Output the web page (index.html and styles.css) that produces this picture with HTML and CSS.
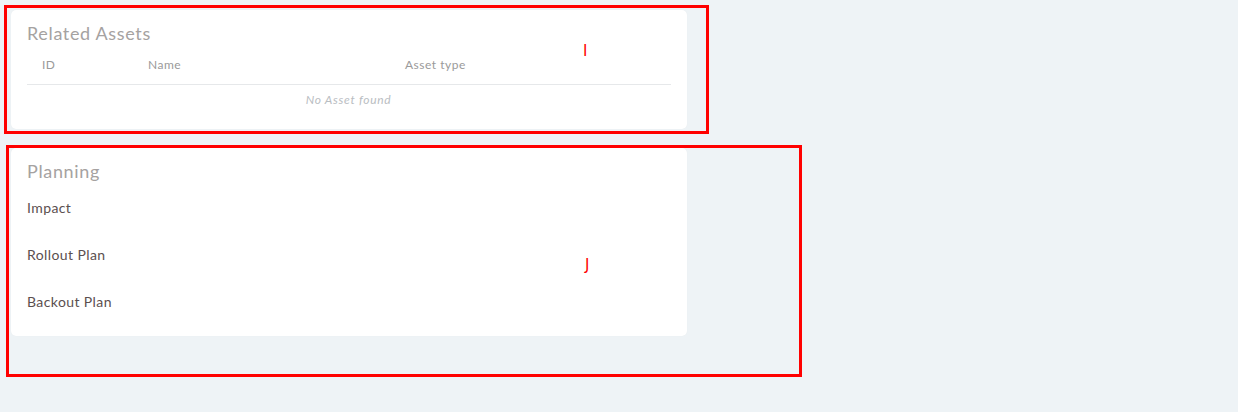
FILE: index.html
```html
<!DOCTYPE html>
<html>
<head>
<meta charset="utf-8">
<link rel="stylesheet" href="styles.css">
</head>
<body>
<div class="page">
  <section class="card assets">
    <h2 class="card-title">Related Assets</h2>
    <div class="table">
      <div class="thead">
        <span class="th th-id">ID</span>
        <span class="th th-name">Name</span>
        <span class="th th-type">Asset type</span>
      </div>
      <div class="empty">No Asset found</div>
    </div>
  </section>
  <section class="card planning">
    <h2 class="card-title">Planning</h2>
    <div class="field">Impact</div>
    <div class="field">Rollout Plan</div>
    <div class="field">Backout Plan</div>
  </section>
</div>
<div class="mark mark-i"><span class="mark-label label-i">I</span></div>
<div class="mark mark-j"><span class="mark-label label-j">J</span></div>
</body>
</html>
```
FILE: styles.css
```css
html, body {
  margin: 0;
  padding: 0;
}
body {
  background: #eef3f6;
  font-family: "Lato", "Noto Sans", sans-serif;
  width: 1238px;
  height: 412px;
  position: relative;
  overflow: hidden;
}
.page {
  display: flex;
  flex-direction: column;
  gap: 19px;
  padding: 10px 0 0 11px;
  width: 676px;
}
.card {
  background: #ffffff;
  border-radius: 5px;
  box-shadow: 0 0 1px rgba(0,0,0,0.06);
  padding: 0 16px;
}
.assets {
  height: 119px;
  box-sizing: border-box;
  padding-top: 12px;
}
.planning {
  height: 188px;
  box-sizing: border-box;
  padding-top: 12px;
}
.card-title {
  margin: 0;
  font-weight: 400;
  font-size: 18px;
  line-height: 22px;
  letter-spacing: 0.65px;
  color: #a5a2a1;
}
.table {
  margin-top: 9px;
}
.thead {
  display: grid;
  grid-template-columns: 106px 257px 1fr;
  height: 22px;
  align-items: center;
  padding-bottom: 9px;
  border-bottom: 1px solid #e6e8ea;
}
.th {
  font-size: 12px;
  letter-spacing: 0.5px;
  color: #9a9a9a;
  padding-left: 15px;
}
.empty {
  text-align: center;
  font-style: italic;
  font-size: 12px;
  letter-spacing: 0.7px;
  color: #b9bdc2;
  line-height: 30px;
  margin-right: 1px;
}
.field {
  font-size: 14px;
  letter-spacing: 0.4px;
  color: #5b4f4f;
  line-height: 20px;
  margin-top: 16px;
}
.field + .field {
  margin-top: 27px;
}
.mark {
  position: absolute;
  border: 3px solid #ff0000;
  box-sizing: border-box;
}
.mark-i {
  left: 4px;
  top: 5px;
  width: 705px;
  height: 129px;
}
.mark-j {
  left: 6px;
  top: 145px;
  width: 796px;
  height: 232px;
}
.mark-label {
  position: absolute;
  font-family: "DejaVu Sans", sans-serif;
  font-size: 15px;
  line-height: 16px;
  color: #ff0000;
}
.label-i {
  left: 576px;
  top: 35px;
}
.label-j {
  left: 576px;
  top: 109px;
}
```
